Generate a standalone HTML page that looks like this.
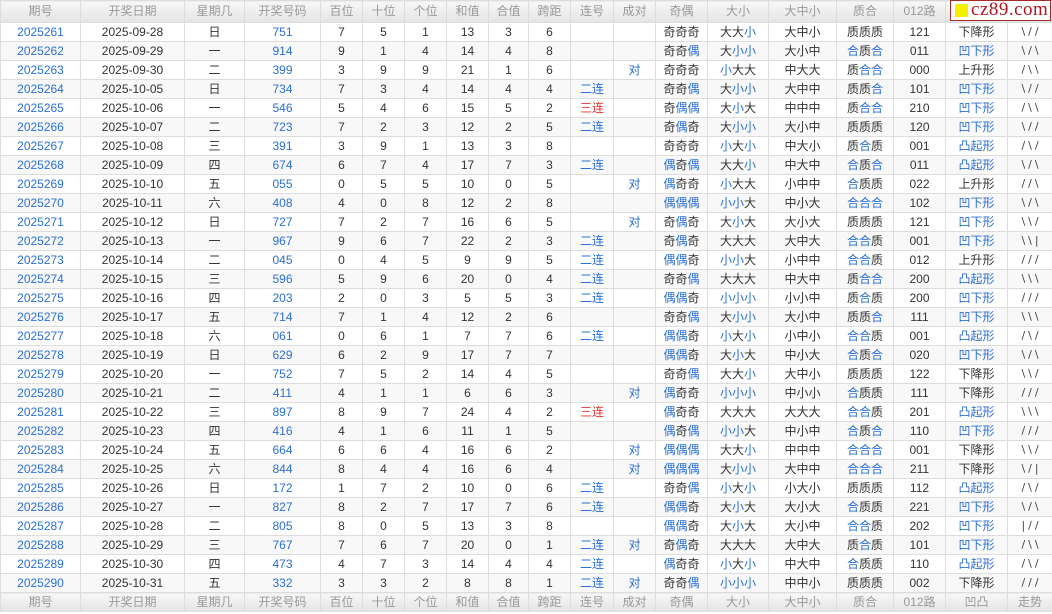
<!DOCTYPE html>
<html><head><meta charset="utf-8"><style>
body{margin:0;background:#fff;width:1052px;height:614px;overflow:hidden;position:relative;font-family:"Liberation Sans","Noto Sans CJK SC",sans-serif;}
table{border-collapse:collapse;table-layout:fixed;width:1052px;font-size:12px;color:#333;}
td,th{border:1px solid #ddd;text-align:center;padding:0;height:18px;line-height:18px;white-space:nowrap;overflow:hidden;}
th{font-weight:normal;color:#999;background:linear-gradient(#f7f7f7,#e4e4e4);height:21px;line-height:21px;}
tfoot th{height:18px;line-height:18px;}
tbody tr:nth-child(even) td{background:#f8f8f8;}
.b,i{color:#2a6fd4;font-style:normal;}
.r{color:#e8312f;}
td:first-child{color:#2a6fd4;}
td:last-child{letter-spacing:3px;text-indent:3px;font-family:"DejaVu Sans",sans-serif;font-size:11px;color:#444;}
#logo{position:absolute;left:950px;top:0;width:99px;height:19px;border:1px solid #a52a2a;background:#fff;}
#logo span{position:absolute;left:4px;top:3px;width:13px;height:13px;background:#f5f000;}
#logo b{position:absolute;left:20px;top:-2px;font-family:"Liberation Serif",serif;font-weight:normal;font-size:19px;color:#b0141e;letter-spacing:0.5px;}
</style></head><body>
<table>
<colgroup><col style="width:80px"><col style="width:104px"><col style="width:60px"><col style="width:76px"><col style="width:42px"><col style="width:42px"><col style="width:42px"><col style="width:42px"><col style="width:40px"><col style="width:42px"><col style="width:43px"><col style="width:42px"><col style="width:52px"><col style="width:61px"><col style="width:68px"><col style="width:57px"><col style="width:52px"><col style="width:62px"><col style="width:45px"></colgroup>
<thead><tr><th>期号</th><th>开奖日期</th><th>星期几</th><th>开奖号码</th><th>百位</th><th>十位</th><th>个位</th><th>和值</th><th>合值</th><th>跨距</th><th>连号</th><th>成对</th><th>奇偶</th><th>大小</th><th>大中小</th><th>质合</th><th>012路</th><th>凹凸</th><th>走势</th></tr></thead>
<tbody>
<tr><td>2025261</td><td>2025-09-28</td><td>日</td><td class="b">751</td><td>7</td><td>5</td><td>1</td><td>13</td><td>3</td><td>6</td><td></td><td></td><td>奇奇奇</td><td>大大<i>小</i></td><td>大中小</td><td>质质质</td><td>121</td><td>下降形</td><td>\//</td></tr>
<tr><td>2025262</td><td>2025-09-29</td><td>一</td><td class="b">914</td><td>9</td><td>1</td><td>4</td><td>14</td><td>4</td><td>8</td><td></td><td></td><td>奇奇<i>偶</i></td><td>大<i>小小</i></td><td>大小中</td><td><i>合</i>质<i>合</i></td><td>011</td><td class="b">凹下形</td><td>\/\</td></tr>
<tr><td>2025263</td><td>2025-09-30</td><td>二</td><td class="b">399</td><td>3</td><td>9</td><td>9</td><td>21</td><td>1</td><td>6</td><td></td><td class="b">对</td><td>奇奇奇</td><td><i>小</i>大大</td><td>中大大</td><td>质<i>合合</i></td><td>000</td><td>上升形</td><td>/\\</td></tr>
<tr><td>2025264</td><td>2025-10-05</td><td>日</td><td class="b">734</td><td>7</td><td>3</td><td>4</td><td>14</td><td>4</td><td>4</td><td class="b">二连</td><td></td><td>奇奇<i>偶</i></td><td>大<i>小小</i></td><td>大中中</td><td>质质<i>合</i></td><td>101</td><td class="b">凹下形</td><td>\//</td></tr>
<tr><td>2025265</td><td>2025-10-06</td><td>一</td><td class="b">546</td><td>5</td><td>4</td><td>6</td><td>15</td><td>5</td><td>2</td><td class="r">三连</td><td></td><td>奇<i>偶偶</i></td><td>大<i>小</i>大</td><td>中中中</td><td>质<i>合合</i></td><td>210</td><td class="b">凹下形</td><td>/\\</td></tr>
<tr><td>2025266</td><td>2025-10-07</td><td>二</td><td class="b">723</td><td>7</td><td>2</td><td>3</td><td>12</td><td>2</td><td>5</td><td class="b">二连</td><td></td><td>奇<i>偶</i>奇</td><td>大<i>小小</i></td><td>大小中</td><td>质质质</td><td>120</td><td class="b">凹下形</td><td>\//</td></tr>
<tr><td>2025267</td><td>2025-10-08</td><td>三</td><td class="b">391</td><td>3</td><td>9</td><td>1</td><td>13</td><td>3</td><td>8</td><td></td><td></td><td>奇奇奇</td><td><i>小</i>大<i>小</i></td><td>中大小</td><td>质<i>合</i>质</td><td>001</td><td class="b">凸起形</td><td>/\/</td></tr>
<tr><td>2025268</td><td>2025-10-09</td><td>四</td><td class="b">674</td><td>6</td><td>7</td><td>4</td><td>17</td><td>7</td><td>3</td><td class="b">二连</td><td></td><td><i>偶</i>奇<i>偶</i></td><td>大大<i>小</i></td><td>中大中</td><td><i>合</i>质<i>合</i></td><td>011</td><td class="b">凸起形</td><td>\/\</td></tr>
<tr><td>2025269</td><td>2025-10-10</td><td>五</td><td class="b">055</td><td>0</td><td>5</td><td>5</td><td>10</td><td>0</td><td>5</td><td></td><td class="b">对</td><td><i>偶</i>奇奇</td><td><i>小</i>大大</td><td>小中中</td><td><i>合</i>质质</td><td>022</td><td>上升形</td><td>//\</td></tr>
<tr><td>2025270</td><td>2025-10-11</td><td>六</td><td class="b">408</td><td>4</td><td>0</td><td>8</td><td>12</td><td>2</td><td>8</td><td></td><td></td><td><i>偶偶偶</i></td><td><i>小小</i>大</td><td>中小大</td><td><i>合合合</i></td><td>102</td><td class="b">凹下形</td><td>\/\</td></tr>
<tr><td>2025271</td><td>2025-10-12</td><td>日</td><td class="b">727</td><td>7</td><td>2</td><td>7</td><td>16</td><td>6</td><td>5</td><td></td><td class="b">对</td><td>奇<i>偶</i>奇</td><td>大<i>小</i>大</td><td>大小大</td><td>质质质</td><td>121</td><td class="b">凹下形</td><td>\\/</td></tr>
<tr><td>2025272</td><td>2025-10-13</td><td>一</td><td class="b">967</td><td>9</td><td>6</td><td>7</td><td>22</td><td>2</td><td>3</td><td class="b">二连</td><td></td><td>奇<i>偶</i>奇</td><td>大大大</td><td>大中大</td><td><i>合合</i>质</td><td>001</td><td class="b">凹下形</td><td>\\|</td></tr>
<tr><td>2025273</td><td>2025-10-14</td><td>二</td><td class="b">045</td><td>0</td><td>4</td><td>5</td><td>9</td><td>9</td><td>5</td><td class="b">二连</td><td></td><td><i>偶偶</i>奇</td><td><i>小小</i>大</td><td>小中中</td><td><i>合合</i>质</td><td>012</td><td>上升形</td><td>///</td></tr>
<tr><td>2025274</td><td>2025-10-15</td><td>三</td><td class="b">596</td><td>5</td><td>9</td><td>6</td><td>20</td><td>0</td><td>4</td><td class="b">二连</td><td></td><td>奇奇<i>偶</i></td><td>大大大</td><td>中大中</td><td>质<i>合合</i></td><td>200</td><td class="b">凸起形</td><td>\\\</td></tr>
<tr><td>2025275</td><td>2025-10-16</td><td>四</td><td class="b">203</td><td>2</td><td>0</td><td>3</td><td>5</td><td>5</td><td>3</td><td class="b">二连</td><td></td><td><i>偶偶</i>奇</td><td><i>小小小</i></td><td>小小中</td><td>质<i>合</i>质</td><td>200</td><td class="b">凹下形</td><td>///</td></tr>
<tr><td>2025276</td><td>2025-10-17</td><td>五</td><td class="b">714</td><td>7</td><td>1</td><td>4</td><td>12</td><td>2</td><td>6</td><td></td><td></td><td>奇奇<i>偶</i></td><td>大<i>小小</i></td><td>大小中</td><td>质质<i>合</i></td><td>111</td><td class="b">凹下形</td><td>\\\</td></tr>
<tr><td>2025277</td><td>2025-10-18</td><td>六</td><td class="b">061</td><td>0</td><td>6</td><td>1</td><td>7</td><td>7</td><td>6</td><td class="b">二连</td><td></td><td><i>偶偶</i>奇</td><td><i>小</i>大<i>小</i></td><td>小中小</td><td><i>合合</i>质</td><td>001</td><td class="b">凸起形</td><td>/\/</td></tr>
<tr><td>2025278</td><td>2025-10-19</td><td>日</td><td class="b">629</td><td>6</td><td>2</td><td>9</td><td>17</td><td>7</td><td>7</td><td></td><td></td><td><i>偶偶</i>奇</td><td>大<i>小</i>大</td><td>中小大</td><td><i>合</i>质<i>合</i></td><td>020</td><td class="b">凹下形</td><td>\/\</td></tr>
<tr><td>2025279</td><td>2025-10-20</td><td>一</td><td class="b">752</td><td>7</td><td>5</td><td>2</td><td>14</td><td>4</td><td>5</td><td></td><td></td><td>奇奇<i>偶</i></td><td>大大<i>小</i></td><td>大中小</td><td>质质质</td><td>122</td><td>下降形</td><td>\\/</td></tr>
<tr><td>2025280</td><td>2025-10-21</td><td>二</td><td class="b">411</td><td>4</td><td>1</td><td>1</td><td>6</td><td>6</td><td>3</td><td></td><td class="b">对</td><td><i>偶</i>奇奇</td><td><i>小小小</i></td><td>中小小</td><td><i>合</i>质质</td><td>111</td><td>下降形</td><td>///</td></tr>
<tr><td>2025281</td><td>2025-10-22</td><td>三</td><td class="b">897</td><td>8</td><td>9</td><td>7</td><td>24</td><td>4</td><td>2</td><td class="r">三连</td><td></td><td><i>偶</i>奇奇</td><td>大大大</td><td>大大大</td><td><i>合合</i>质</td><td>201</td><td class="b">凸起形</td><td>\\\</td></tr>
<tr><td>2025282</td><td>2025-10-23</td><td>四</td><td class="b">416</td><td>4</td><td>1</td><td>6</td><td>11</td><td>1</td><td>5</td><td></td><td></td><td><i>偶</i>奇<i>偶</i></td><td><i>小小</i>大</td><td>中小中</td><td><i>合</i>质<i>合</i></td><td>110</td><td class="b">凹下形</td><td>///</td></tr>
<tr><td>2025283</td><td>2025-10-24</td><td>五</td><td class="b">664</td><td>6</td><td>6</td><td>4</td><td>16</td><td>6</td><td>2</td><td></td><td class="b">对</td><td><i>偶偶偶</i></td><td>大大<i>小</i></td><td>中中中</td><td><i>合合合</i></td><td>001</td><td>下降形</td><td>\\/</td></tr>
<tr><td>2025284</td><td>2025-10-25</td><td>六</td><td class="b">844</td><td>8</td><td>4</td><td>4</td><td>16</td><td>6</td><td>4</td><td></td><td class="b">对</td><td><i>偶偶偶</i></td><td>大<i>小小</i></td><td>大中中</td><td><i>合合合</i></td><td>211</td><td>下降形</td><td>\/|</td></tr>
<tr><td>2025285</td><td>2025-10-26</td><td>日</td><td class="b">172</td><td>1</td><td>7</td><td>2</td><td>10</td><td>0</td><td>6</td><td class="b">二连</td><td></td><td>奇奇<i>偶</i></td><td><i>小</i>大<i>小</i></td><td>小大小</td><td>质质质</td><td>112</td><td class="b">凸起形</td><td>/\/</td></tr>
<tr><td>2025286</td><td>2025-10-27</td><td>一</td><td class="b">827</td><td>8</td><td>2</td><td>7</td><td>17</td><td>7</td><td>6</td><td class="b">二连</td><td></td><td><i>偶偶</i>奇</td><td>大<i>小</i>大</td><td>大小大</td><td><i>合</i>质质</td><td>221</td><td class="b">凹下形</td><td>\/\</td></tr>
<tr><td>2025287</td><td>2025-10-28</td><td>二</td><td class="b">805</td><td>8</td><td>0</td><td>5</td><td>13</td><td>3</td><td>8</td><td></td><td></td><td><i>偶偶</i>奇</td><td>大<i>小</i>大</td><td>大小中</td><td><i>合合</i>质</td><td>202</td><td class="b">凹下形</td><td>|//</td></tr>
<tr><td>2025288</td><td>2025-10-29</td><td>三</td><td class="b">767</td><td>7</td><td>6</td><td>7</td><td>20</td><td>0</td><td>1</td><td class="b">二连</td><td class="b">对</td><td>奇<i>偶</i>奇</td><td>大大大</td><td>大中大</td><td>质<i>合</i>质</td><td>101</td><td class="b">凹下形</td><td>/\\</td></tr>
<tr><td>2025289</td><td>2025-10-30</td><td>四</td><td class="b">473</td><td>4</td><td>7</td><td>3</td><td>14</td><td>4</td><td>4</td><td class="b">二连</td><td></td><td><i>偶</i>奇奇</td><td><i>小</i>大<i>小</i></td><td>中大中</td><td><i>合</i>质质</td><td>110</td><td class="b">凸起形</td><td>/\/</td></tr>
<tr><td>2025290</td><td>2025-10-31</td><td>五</td><td class="b">332</td><td>3</td><td>3</td><td>2</td><td>8</td><td>8</td><td>1</td><td class="b">二连</td><td class="b">对</td><td>奇奇<i>偶</i></td><td><i>小小小</i></td><td>中中小</td><td>质质质</td><td>002</td><td>下降形</td><td>///</td></tr>
</tbody>
<tfoot><tr><th>期号</th><th>开奖日期</th><th>星期几</th><th>开奖号码</th><th>百位</th><th>十位</th><th>个位</th><th>和值</th><th>合值</th><th>跨距</th><th>连号</th><th>成对</th><th>奇偶</th><th>大小</th><th>大中小</th><th>质合</th><th>012路</th><th>凹凸</th><th>走势</th></tr></tfoot>
</table>
<div id="logo"><span></span><b>cz89.com</b></div>
</body></html>
